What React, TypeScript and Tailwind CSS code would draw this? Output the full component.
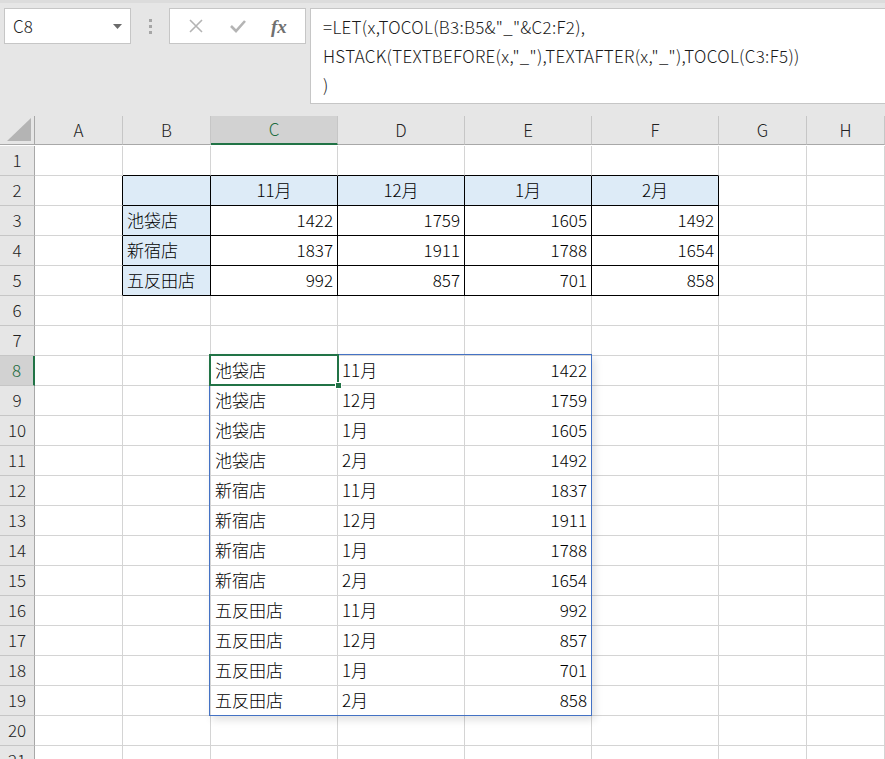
import React from "react";

const FONT = { fontFamily: '"Noto Sans CJK JP", "Noto Sans", sans-serif' };

const ColumnLetters = ["A", "B", "C", "D", "E", "F", "G", "H"];
const RowCount = 21;

type CellData = { Text: string; Align: "left" | "center" | "right" };

// 元データ B2:F5
const Months = ["11月", "12月", "1月", "2月"];
const Stores = ["池袋店", "新宿店", "五反田店"];
const Sales = [
  [1422, 1759, 1605, 1492],
  [1837, 1911, 1788, 1654],
  [992, 857, 701, 858],
];

function GetCell(Row: number, Col: number): CellData | null {
  // Col: 0 = A, 1 = B ...
  if (Row === 2 && Col >= 2 && Col <= 5) return { Text: Months[Col - 2], Align: "center" };
  if (Row >= 3 && Row <= 5) {
    if (Col === 1) return { Text: Stores[Row - 3], Align: "left" };
    if (Col >= 2 && Col <= 5) return { Text: String(Sales[Row - 3][Col - 2]), Align: "right" };
  }
  // スピル範囲 C8:E19
  if (Row >= 8 && Row <= 19) {
    const Index = Row - 8;
    const StoreIndex = Math.floor(Index / 4);
    const MonthIndex = Index % 4;
    if (Col === 2) return { Text: Stores[StoreIndex], Align: "left" };
    if (Col === 3) return { Text: Months[MonthIndex], Align: "left" };
    if (Col === 4) return { Text: String(Sales[StoreIndex][MonthIndex]), Align: "right" };
  }
  return null;
}

const InTable = (Row: number, Col: number) => Row >= 2 && Row <= 5 && Col >= 1 && Col <= 5;
const IsHeaderFill = (Row: number, Col: number) =>
  InTable(Row, Col) && (Row === 2 || Col === 1);

function FormulaBar() {
  return (
    <div className="h-[116px] bg-[#e6e6e6] border-t-[3px] border-t-[#dcdcdc] flex items-start pt-[5px] pl-[4px]">
      <div className="w-[127px] h-[36px] bg-white border border-[#c6c6c6] flex items-center justify-between pl-[8px] pr-[8px]">
        <span className="text-[17px] font-light text-[#222]">C8</span>
        <svg width="9" height="5" viewBox="0 0 9 5">
          <path d="M0 0 L9 0 L4.5 5 Z" fill="#6b6b6b" />
        </svg>
      </div>
      <div className="w-[38px] h-[36px] flex flex-col items-center justify-center gap-[3px]">
        <div className="w-[3px] h-[3px] bg-[#a6a6a6]" />
        <div className="w-[3px] h-[3px] bg-[#a6a6a6]" />
        <div className="w-[3px] h-[3px] bg-[#a6a6a6]" />
      </div>
      <div className="w-[137px] h-[36px] bg-white border border-[#c6c6c6] flex items-center justify-around px-[6px]">
        <svg width="16" height="16" viewBox="0 0 16 16">
          <path d="M2 2 L14 14 M14 2 L2 14" stroke="#b4b4b4" strokeWidth="1.6" />
        </svg>
        <svg width="18" height="16" viewBox="0 0 18 16">
          <path d="M2 8 L7 13 L16 3" stroke="#b4b4b4" strokeWidth="2.6" fill="none" />
        </svg>
        <span
          className="text-[19px] italic font-bold text-[#707070] leading-none"
          style={{ fontFamily: '"Liberation Serif", serif' }}
        >
          fx
        </span>
      </div>
      <div className="ml-[4px] flex-1 h-[96px] bg-white border border-r-0 border-[#c6c6c6] pl-[12px] pt-[3px] text-[17px] leading-[29px] font-light text-[#1a1a1a] tracking-[0.3px]">
        <div>=LET(x,TOCOL(B3:B5&amp;"_"&amp;C2:F2),</div>
        <div>HSTACK(TEXTBEFORE(x,"_"),TEXTAFTER(x,"_"),TOCOL(C3:F5))</div>
        <div>)</div>
      </div>
    </div>
  );
}

function Sheet() {
  return (
    <div className="relative grid grid-cols-[35px_88px_88px_127px_127px_127px_127px_88px_1fr] auto-rows-[30px] text-[17px] font-light text-[#000]">
      {/* 列見出し */}
      <div className="h-[29px] bg-[#e6e6e6] border-r border-r-[#a8a8a8] border-b border-b-[#a8a8a8] flex items-end justify-end p-[3px]">
        <svg width="24" height="23" viewBox="0 0 24 23">
          <path d="M24 0 L24 23 L0 23 Z" fill="#b4b4b4" />
        </svg>
      </div>
      {ColumnLetters.map((Letter) => (
        <div
          key={Letter}
          className={
            Letter === "C"
              ? "h-[29px] pb-[1px] bg-[#d2d2d2] border-r border-r-[#c6c6c6] border-b-2 border-b-[#217346] flex items-center justify-center text-[#1d6b40]"
              : "h-[29px] pb-[1px] bg-[#e6e6e6] border-r border-r-[#c6c6c6] border-b border-b-[#a8a8a8] flex items-center justify-center text-[#222]"
          }
        >
          {Letter}
        </div>
      ))}

      {Array.from({ length: RowCount }, (_, i) => i + 1).map((Row) => (
        <React.Fragment key={Row}>
          <div
            className={
              Row === 8
                ? "pb-[2px] bg-[#d2d2d2] border-r-2 border-r-[#217346] border-b border-b-[#c6c6c6] flex items-center justify-center text-[#1d6b40]"
                : "pb-[2px] bg-[#e6e6e6] border-r border-r-[#a8a8a8] border-b border-b-[#c6c6c6] flex items-center justify-center text-[#222]"
            }
          >
            {Row}
          </div>
          {ColumnLetters.map((_, Col) => {
            const Cell = GetCell(Row, Col);
            const RightBlack = InTable(Row, Col) || InTable(Row, Col + 1);
            const BottomBlack = InTable(Row, Col) || InTable(Row + 1, Col);
            return (
              <div
                key={Col}
                className={[
                  "flex items-center px-[4px] pb-[2px] overflow-hidden whitespace-nowrap border-r border-b",
                  RightBlack ? "border-r-black" : "border-r-[#d4d4d4]",
                  BottomBlack ? "border-b-black" : "border-b-[#d4d4d4]",
                  IsHeaderFill(Row, Col) ? "bg-[#ddebf7]" : "bg-white",
                  Cell?.Align === "right"
                    ? "justify-end"
                    : Cell?.Align === "center"
                    ? "justify-center"
                    : "justify-start",
                ].join(" ")}
              >
                {Cell?.Text}
              </div>
            );
          })}
        </React.Fragment>
      ))}

      {/* スピル範囲の枠 */}
      <div className="absolute left-[209px] top-[238px] w-[383px] h-[362px] border border-[#4472c4] shadow-[3px_4px_8px_rgba(0,0,0,0.12)] pointer-events-none" />
      {/* 選択セル C8 */}
      <div className="absolute left-[209px] top-[238px] w-[130px] h-[32px] border-2 border-[#217346] pointer-events-none">
        <div className="absolute right-[-5px] bottom-[-5px] w-[7px] h-[7px] bg-[#217346] border border-white" />
      </div>
    </div>
  );
}

export default function App() {
  return (
    <div className="w-[885px] h-[759px] overflow-hidden bg-white" style={FONT}>
      <FormulaBar />
      <Sheet />
    </div>
  );
}
